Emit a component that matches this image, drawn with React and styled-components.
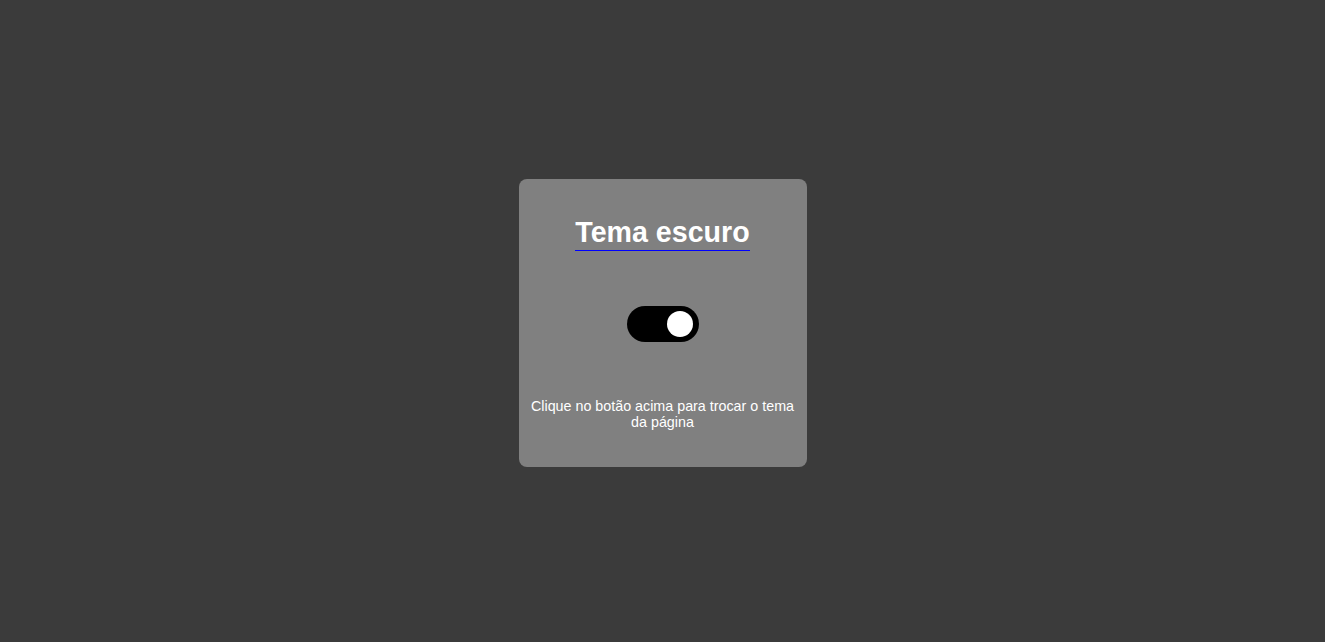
import React, { useState } from "react";
import styled, { createGlobalStyle } from "styled-components";

const Global = createGlobalStyle`
    html, body {
        margin: 0;
        padding: 0;
        height: 100%;
        background-color: #3b3b3b;
        font-family: "Liberation Sans", Arial, sans-serif;
    }
    #root {
        height: 100%;
    }
`;

const Page = styled.div`
    height: 100vh;
    display: flex;
    align-items: center;
    justify-content: center;
    padding-top: 4px;
    box-sizing: border-box;
`;

const Card = styled.div`
    width: 288px;
    height: 288px;
    box-sizing: border-box;
    background-color: #808080;
    border-radius: 8px;
    padding: 37px 8px 0;
    display: flex;
    flex-direction: column;
    align-items: center;
    gap: 56px;
    color: #fff;
`;

const Title = styled.h1`
    margin: 0 0 -1px;
    font-size: 28.6px;
    line-height: 32px;
    font-weight: bold;
    padding-bottom: 2px;
    border-bottom: 1px solid #0000ff;
`;

const Switch = styled.button`
    width: 72px;
    height: 36px;
    border: none;
    border-radius: 18px;
    background-color: #000;
    padding: 0 6px;
    display: flex;
    align-items: center;
    justify-content: ${(props) => (props.$on ? "flex-end" : "flex-start")};
    cursor: pointer;
`;

const Knob = styled.span`
    width: 26px;
    height: 26px;
    border-radius: 50%;
    background-color: #fff;
`;

const Hint = styled.p`
    margin: 0;
    font-size: 14.3px;
    line-height: 16px;
    text-align: center;
`;

const App = () => {
    const [dark, setDark] = useState(true);

    return (
        <Page>
            <Global />
            <Card>
                <Title>Tema escuro</Title>
                <Switch $on={dark} onClick={() => setDark(!dark)}>
                    <Knob />
                </Switch>
                <Hint>Clique no botão acima para trocar o tema da página</Hint>
            </Card>
        </Page>
    );
};

export default App;
